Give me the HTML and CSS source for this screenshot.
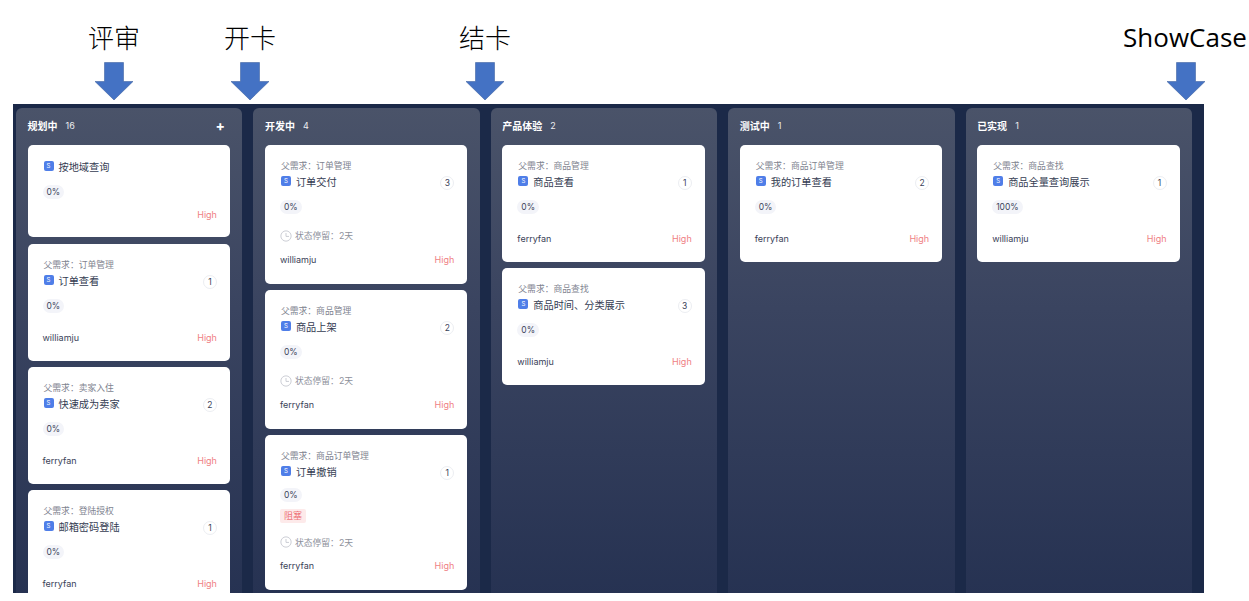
FILE: index.html
```html
<!DOCTYPE html>
<html lang="zh-CN">

<head>
  <meta charset="UTF-8">
  <title>看板流程</title>
  <link rel="stylesheet" href="styles.css">
</head>

<body>
  <div class="notes">
    <div class="note note-review">
      <span>评审</span>
      <svg class="arrow" viewBox="0 0 40 40"><path d="M10.5 1.5h19v19h9.5L20 39 1 20.5h9.500z" /></svg>
    </div>
    <div class="note note-open">
      <span>开卡</span>
      <svg class="arrow" viewBox="0 0 40 40"><path d="M10.5 1.5h19v19h9.5L20 39 1 20.5h9.500z" /></svg>
    </div>
    <div class="note note-close">
      <span>结卡</span>
      <svg class="arrow" viewBox="0 0 40 40"><path d="M10.5 1.500h19v19h9.5L20 39 1 20.5h9.500z" /></svg>
    </div>
    <div class="note note-show">
      <span>ShowCase</span>
      <svg class="arrow" viewBox="0 0 40 40"><path d="M10.5 1.5h19v19h9.5L20 39 1 20.5h9.500z" /></svg>
    </div>
  </div>

  <div class="board">
    <section class="column">
      <div class="column-head"><b>规划中</b><em>16</em><i class="plus">+</i></div>

      <div class="card card-root">
        <div class="title"><span class="badge">S</span><span class="name">按地域查询</span></div>
        <div class="percent">0%</div>
        <div class="foot"><span></span><span class="high">High</span></div>
      </div>

      <div class="card">
        <div class="parent">父需求：订单管理</div>
        <div class="title"><span class="badge">S</span><span class="name">订单查看</span><span class="count">1</span></div>
        <div class="percent">0%</div>
        <div class="foot"><span>williamju</span><span class="high">High</span></div>
      </div>

      <div class="card">
        <div class="parent">父需求：卖家入住</div>
        <div class="title"><span class="badge">S</span><span class="name">快速成为卖家</span><span class="count">2</span></div>
        <div class="percent">0%</div>
        <div class="foot"><span>ferryfan</span><span class="high">High</span></div>
      </div>

      <div class="card">
        <div class="parent">父需求：登陆授权</div>
        <div class="title"><span class="badge">S</span><span class="name">邮箱密码登陆</span><span class="count">1</span></div>
        <div class="percent">0%</div>
        <div class="foot"><span>ferryfan</span><span class="high">High</span></div>
      </div>
    </section>

    <section class="column">
      <div class="column-head"><b>开发中</b><em>4</em></div>

      <div class="card card-stay">
        <div class="parent">父需求：订单管理</div>
        <div class="title"><span class="badge">S</span><span class="name">订单交付</span><span class="count">3</span></div>
        <div class="percent">0%</div>
        <div class="stay">
          <svg class="clock" viewBox="0 0 14 14"><circle cx="7" cy="7" r="6" /><path d="M7 3.500V7.500H10.500" /></svg>
          状态停留：2天
        </div>
        <div class="foot"><span>williamju</span><span class="high">High</span></div>
      </div>

      <div class="card card-stay">
        <div class="parent">父需求：商品管理</div>
        <div class="title"><span class="badge">S</span><span class="name">商品上架</span><span class="count">2</span></div>
        <div class="percent">0%</div>
        <div class="stay">
          <svg class="clock" viewBox="0 0 14 14"><circle cx="7" cy="7" r="6" /><path d="M7 3.500V7.500H10.500" /></svg>
          状态停留：2天
        </div>
        <div class="foot"><span>ferryfan</span><span class="high">High</span></div>
      </div>

      <div class="card card-blocked">
        <div class="parent">父需求：商品订单管理</div>
        <div class="title"><span class="badge">S</span><span class="name">订单撤销</span><span class="count">1</span></div>
        <div class="percent">0%</div>
        <div class="blocked">阻塞</div>
        <div class="stay">
          <svg class="clock" viewBox="0 0 14 14"><circle cx="7" cy="7" r="6" /><path d="M7 3.500V7.500H10.500" /></svg>
          状态停留：2天
        </div>
        <div class="foot"><span>ferryfan</span><span class="high">High</span></div>
      </div>
    </section>

    <section class="column">
      <div class="column-head"><b>产品体验</b><em>2</em></div>

      <div class="card">
        <div class="parent">父需求：商品管理</div>
        <div class="title"><span class="badge">S</span><span class="name">商品查看</span><span class="count">1</span></div>
        <div class="percent">0%</div>
        <div class="foot"><span>ferryfan</span><span class="high">High</span></div>
      </div>

      <div class="card">
        <div class="parent">父需求：商品查找</div>
        <div class="title"><span class="badge">S</span><span class="name">商品时间、分类展示</span><span class="count">3</span></div>
        <div class="percent">0%</div>
        <div class="foot"><span>williamju</span><span class="high">High</span></div>
      </div>
    </section>

    <section class="column">
      <div class="column-head"><b>测试中</b><em>1</em></div>

      <div class="card">
        <div class="parent">父需求：商品订单管理</div>
        <div class="title"><span class="badge">S</span><span class="name">我的订单查看</span><span class="count">2</span></div>
        <div class="percent">0%</div>
        <div class="foot"><span>ferryfan</span><span class="high">High</span></div>
      </div>
    </section>

    <section class="column">
      <div class="column-head"><b>已实现</b><em>1</em></div>

      <div class="card">
        <div class="parent">父需求：商品查找</div>
        <div class="title"><span class="badge">S</span><span class="name">商品全量查询展示</span><span class="count">1</span></div>
        <div class="percent">100%</div>
        <div class="foot"><span>williamju</span><span class="high">High</span></div>
      </div>
    </section>
  </div>
</body>

</html>
```

FILE: styles.css
```css
html,
body {
  height: 100%;
}

body {
  margin: 0;
  background-color: #fff;
  font-family: 'Inter', 'Noto Sans CJK SC', sans-serif;
  color: #2f3850;
  overflow: hidden;
}

/* annotations above the board */
.notes {
  position: relative;
  height: 104px;
}

.note {
  position: absolute;
  top: 18px;
  display: flex;
  flex-direction: column;
  align-items: center;
  width: 130px;
  margin-left: -65px;
}

.note span {
  height: 38px;
  line-height: 38px;
  font-size: 26px;
  font-family: 'Noto Sans CJK SC', sans-serif;
  font-weight: 300;
  color: #000;
  white-space: nowrap;
}

.note-review {
  left: 114px;
}

.note-open {
  left: 250px;
}

.note-close {
  left: 485px;
}

.note-show {
  left: 1186px;
}

.note-show span {
  margin-right: 2px;
  font-family: 'Open Sans', sans-serif;
  font-weight: 400;
}

.arrow {
  width: 40px;
  height: 40px;
  margin-top: 5px;
  margin-bottom: -10px;
}

.arrow path {
  fill: #4472c4;
  stroke: #2f5597;
  stroke-width: 0.5;
}

/* board */
.board {
  display: flex;
  gap: 11px;
  width: 1191px;
  height: 489px;
  margin-left: 13px;
  padding: 4px 12px 0 3px;
  box-sizing: border-box;
  background-color: #1b2948;
  overflow: hidden;
}

.column {
  flex: 1;
  min-width: 0;
  height: 600px;
  padding: 0 12.500px 0 11.500px;
  box-sizing: border-box;
  border-radius: 6px 6px 0 0;
  background: linear-gradient(#4a5369 0, #3a4460 200px, #263252 489px);
  display: flex;
  flex-direction: column;
  gap: 6px;
}

.column-head {
  height: 37px;
  margin-bottom: -6px;
  padding-bottom: 3px;
  box-sizing: border-box;
  display: flex;
  align-items: center;
  color: #fff;
  font-size: 10px;
}

.column-head b {
  font-weight: 700;
}

.column-head em {
  font-style: normal;
  font-size: 9px;
  margin-left: 8px;
  opacity: 0.9;
}

.plus {
  margin-left: auto;
  margin-right: 5px;
  font-style: normal;
  font-weight: 700;
  font-size: 14px;
}

/* cards */
.card {
  flex: none;
  height: 117px;
  padding: 15px 13px 0 15px;
  box-sizing: border-box;
  border-radius: 5px;
  background-color: #fff;
  display: flex;
  flex-direction: column;
}

.card-root {
  height: 92px;
  margin-bottom: 1px;
  padding-top: 12px;
}

.card-stay {
  height: 139px;
}

.card-blocked {
  height: 155px;
}

.parent {
  height: 12px;
  line-height: 12px;
  margin-left: 1px;
  font-size: 8.800px;
  color: #80838f;
}

.title {
  height: 20px;
  display: flex;
  align-items: center;
  margin: -1px 0 1px 1px;
}

.badge {
  width: 10px;
  height: 10px;
  border-radius: 2px;
  background-color: #4f7ee8;
  color: #fff;
  font-size: 6px;
  line-height: 10px;
  text-align: center;
  margin-right: 5px;
}

.name {
  font-size: 10.200px;
  color: #343c52;
}

.count {
  margin: 3px 0 0 auto;
  width: 14px;
  height: 14px;
  box-sizing: border-box;
  border: 1px solid #eceef2;
  border-radius: 50%;
  font-size: 8.500px;
  line-height: 12px;
  text-align: center;
  color: #3a4258;
}

.percent {
  align-self: flex-start;
  height: 14px;
  line-height: 14px;
  margin-top: 8px;
  padding: 0 4px;
  border-radius: 7px;
  background-color: #f3f4f9;
  font-size: 8.500px;
  color: #3d455b;
}

.foot {
  display: flex;
  justify-content: space-between;
  height: 12px;
  line-height: 12px;
  margin-top: 18.500px;
  font-size: 9px;
  color: #3a4258;
}

.high {
  color: #ef7f84;
}

.stay {
  display: flex;
  align-items: center;
  gap: 3px;
  height: 14px;
  margin-top: 14.500px;
  font-size: 8.800px;
  color: #8d909b;
}

.clock {
  width: 12px;
  height: 12px;
}

.clock circle,
.clock path {
  fill: none;
  stroke: #c3c6ce;
  stroke-width: 1;
}

.stay + .foot {
  margin-top: 11px;
}

.card-blocked .percent {
  margin-top: 6px;
}

.blocked {
  align-self: flex-start;
  height: 14px;
  line-height: 14px;
  margin-top: 7px;
  padding: 0 4px;
  border-radius: 2px;
  background-color: #fdeaea;
  font-size: 9px;
  color: #ee7378;
}

.card-blocked .stay {
  margin-top: 12px;
}

.card-root .foot {
  margin-top: 10px;
}
```
